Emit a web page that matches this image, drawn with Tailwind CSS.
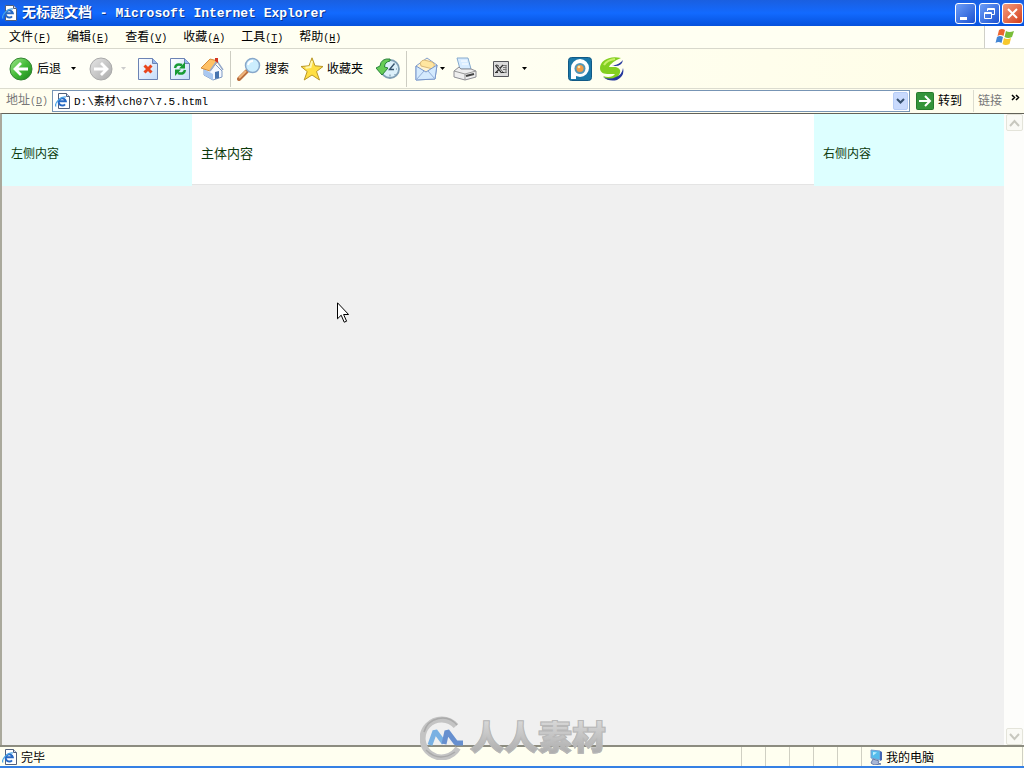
<!DOCTYPE html>
<html lang="zh-CN">
<head>
<meta charset="utf-8">
<title>无标题文档 - Microsoft Internet Explorer</title>
<script src="https://cdn.jsdelivr.net/npm/@tailwindcss/browser@4"></script>
</head>
<body class="relative flex h-screen flex-col overflow-hidden bg-[#fffff2] font-['Liberation_Mono','Noto_Sans_CJK_SC',monospace] text-xs leading-4 text-black">
<svg class="absolute size-0" aria-hidden="true">
  <symbol id="page-ie" viewBox="0 0 16 16">
    <path d="M3.500.5h8l3 3v12h-11z" fill="#fff" stroke="#52607c"/><path d="M11.500.5v3h3" fill="#d2def5" stroke="#52607c"/>
    <path d="M10 11.300a3.600 3.600 0 1 1 .8-3H4.200" fill="none" stroke="#2869c4" stroke-width="2"/>
    <path d="M1 13.500C-1 10 6 3 11 4" fill="none" stroke="#4aa4e5" stroke-width="1.200"/>
  </symbol>
  <symbol id="down" viewBox="0 0 5 3"><path d="M0 0h5L2.500 3z" fill="currentColor"/></symbol>
  <linearGradient id="green" x1="0" y1="0" x2="1" y2="1"><stop stop-color="#a2e890"/><stop offset=".5" stop-color="#45bc38"/><stop offset="1" stop-color="#18841c"/></linearGradient>
  <linearGradient id="gray" x1="0" y1="0" x2="1" y2="1"><stop stop-color="#e6e6e6"/><stop offset="1" stop-color="#aaa"/></linearGradient>
  <linearGradient id="paper" x1="0" y1="0" x2="1" y2="1"><stop stop-color="#fff"/><stop offset="1" stop-color="#c4dcfa"/></linearGradient>
</svg>

<header class="flex h-[26px] shrink-0 items-center bg-linear-to-b from-[#1a5fe0] via-[#126aff] to-[#0752dc] pr-px pl-0.5 text-white">
  <svg class="mr-1 size-4"><use href="#page-ie"/></svg>
  <h1 class="flex-1 text-[14px] font-bold whitespace-pre [text-shadow:1px_1px_#0b3690]">无标题文档<span class="text-[13px]"> - Microsoft Internet Explorer</span></h1>
  <div class="flex gap-0.5">
    <button aria-label="最小化" class="size-[21px] rounded-[3px] border border-white bg-linear-to-br from-[#6d9df7] to-[#1c50d0]"><svg viewBox="0 0 19 19"><path d="M4 13h7v3H4z" fill="#fff"/></svg></button>
    <button aria-label="还原" class="ml-px size-[21px] rounded-[3px] border border-white bg-linear-to-br from-[#6d9df7] to-[#1c50d0]"><svg viewBox="0 0 19 19" fill="none" stroke="#fff"><path d="M7.500 7V4.500h7v6H12M7 5.500h8M4.500 8.500h7v6h-7zM4 9.500h8"/></svg></button>
    <button aria-label="关闭" class="size-[21px] rounded-[3px] border border-white bg-linear-to-br from-[#f39b7d] to-[#d33a12]"><svg viewBox="0 0 19 19"><path d="M5 5l9 9M14 5l-9 9" stroke="#fff" stroke-width="2"/></svg></button>
  </div>
</header>

<nav class="flex h-[23px] shrink-0 items-stretch border-b border-[#d8d8cc]">
  <div class="flex flex-1 items-center gap-4 pt-0.5 pl-[9px]">
    <button class="whitespace-nowrap">文件<span class="text-[10px]">(<u>F</u>)</span></button>
    <button class="whitespace-nowrap">编辑<span class="text-[10px]">(<u>E</u>)</span></button>
    <button class="whitespace-nowrap">查看<span class="text-[10px]">(<u>V</u>)</span></button>
    <button class="whitespace-nowrap">收藏<span class="text-[10px]">(<u>A</u>)</span></button>
    <button class="whitespace-nowrap">工具<span class="text-[10px]">(<u>T</u>)</span></button>
    <button class="whitespace-nowrap">帮助<span class="text-[10px]">(<u>H</u>)</span></button>
  </div>
  <div class="flex w-10 items-center justify-center border-l border-[#d0d0c8] bg-white">
    <svg class="h-[18px] w-5" viewBox="0 0 20 18"><path d="M4 2q3-2 6 0L8.500 8q-3-2-6 0z" fill="#ec6530"/><path d="M11 3q3 2 8 0l-2 6q-4 2-7.500 0z" fill="#79bd39"/><path d="M2 9q3-2 6 0l-1.500 6q-3-2-6 0z" fill="#4385d4"/><path d="M9 10q3 2 7 0l-1.500 6q-4 2-7 0z" fill="#f7c82d"/></svg>
  </div>
</nav>

<div class="flex h-10 shrink-0 items-center border-b border-[#dcdccf] bg-linear-to-r from-[#fffff8] via-[#fffff2] to-[#fffde6]" role="toolbar">
  <div class="flex w-[230px] shrink-0 items-center pl-[9px]">
    <button class="flex items-center gap-1"><svg class="size-6" viewBox="0 0 24 24"><circle cx="12" cy="12" r="11" fill="url(#green)" stroke="#358433"/><path d="M19 12H6M12 6l-6 6 6 6" fill="none" stroke="#fff" stroke-width="2.800"/></svg><span class="pt-0.5">后退</span></button>
    <button aria-label="后退列表" class="ml-2.5"><svg class="h-[3px] w-[5px]"><use href="#down"/></svg></button>
    <button aria-label="前进" class="ml-[13px]"><svg class="size-6" viewBox="0 0 24 24"><circle cx="12" cy="12" r="11" fill="url(#gray)" stroke="#aaa"/><path d="M5 12h13M12 6l6 6-6 6" fill="none" stroke="#fff" stroke-width="2.800"/></svg></button>
    <button aria-label="前进列表" class="ml-2 text-[#ccc]"><svg class="h-[3px] w-[5px]"><use href="#down"/></svg></button>
    <button aria-label="停止" class="ml-3"><svg class="h-6 w-5" viewBox="0 0 20 24"><path d="M.5 1.500h14l5 5v16H.5z" fill="url(#paper)" stroke="#6c83b4"/><path d="M14.500 1.500v5h5" fill="#96b6ee" stroke="#6c83b4"/><path d="M6.500 8.500l7 7M13.500 8.500l-7 7" stroke="#e9451c" stroke-width="3"/></svg></button>
    <button aria-label="刷新" class="ml-3"><svg class="h-6 w-5" viewBox="0 0 20 24"><path d="M.5 1.500h14l5 5v16H.5z" fill="url(#paper)" stroke="#6c83b4"/><path d="M14.500 1.500v5h5" fill="#96b6ee" stroke="#6c83b4"/><path d="M5 11Q6 6 12 8M15 13q-1 5-7 3" fill="none" stroke="#189b35" stroke-width="2.500"/><path d="M15 5v6.500H9zM5 19v-6.500h6z" fill="#189b35"/></svg></button>
    <button aria-label="主页" class="ml-2.5"><svg class="size-6" viewBox="0 0 24 24"><path d="M4 12l10-6 8 8v6l-9 3-9-5z" fill="#f4f8ff" stroke="#7d99c4"/><path d="M4 12l9 5v6l-9-5z" fill="#a9c8f0"/><path d="M1 11L10 2l8 2-8 10z" fill="#ffc165" stroke="#d58c39"/><path d="M10 14l7-10 6 9" fill="none" stroke="#96a9cb" stroke-width="1.500"/><path d="M15 1h3v5l-3-2z" fill="#d43622"/><path d="M15 15l4-1v7l-4 1z" fill="#4774af"/></svg></button>
  </div>
  <div class="flex h-9 w-[176px] shrink-0 items-center border-l border-[#cdcdc2] pl-1.5">
    <button class="flex items-center gap-1 whitespace-nowrap"><svg class="size-6" viewBox="0 0 24 24"><path d="M10 14l-8 8" stroke="#b96e3d" stroke-width="4" stroke-linecap="round"/><path d="M9 14l-7 7" stroke="#f2b77e" stroke-width="2"/><circle cx="15.500" cy="8.500" r="7" fill="#cceefe" stroke="#88a8ca" stroke-width="1.500"/><path d="M11 8q1-4 5-4" fill="none" stroke="#fff" stroke-width="2"/></svg><span class="pt-0.5">搜索</span></button>
    <button class="ml-[11px] flex items-center gap-[3px] whitespace-nowrap"><svg class="size-6" viewBox="0 0 24 24"><path d="M12 .8l3 8 8 .7-6.500 5 3 8.500-7.500-5-7.800 5 3-8.500L1 9.500l8-.7z" fill="#ffdf43" stroke="#b99628"/><path d="M12 4l-1.500 6-5 .8" fill="none" stroke="#fff8b3" stroke-width="2"/></svg><span class="pt-0.5">收藏夹</span></button>
    <button aria-label="历史" class="ml-[13px]"><svg class="size-6" viewBox="0 0 24 24"><circle cx="14" cy="12" r="9" fill="#dcf0fa" stroke="#7f9eb4" stroke-width="1.800"/><path d="M18.500 6.500L13.500 12.500H18" fill="none" stroke="#38536d" stroke-width="1.400"/><path d="M14 17.500v2M21 12h-1M18.500 17l1 1" stroke="#6b8ba2"/><path d="M14 2Q5 1 4 9L0 11l6 7 6-7-3.500-1q0-5 5.500-6z" fill="#66cd55" stroke="#28813a"/></svg></button>
  </div>
  <div class="flex h-9 items-center border-l border-[#cdcdc2] pl-2">
    <button aria-label="邮件"><svg class="size-6" viewBox="0 0 24 24"><path d="M1 9L12 1l10 7-2 14-19 1z" fill="#fff3d0" stroke="#829fcd"/><path d="M6 9q-2-5 3-6l8 2q4 2 1 7z" fill="#ffe6a0" stroke="#dab878"/><path d="M1 9l10 6 11-7-2 14-19 1z" fill="#d4eafe" stroke="#7897cc"/><path d="M1 23l8-9M20 22l-7-8" stroke="#91add7"/></svg></button>
    <button aria-label="邮件列表" class="ml-px"><svg class="h-[3px] w-[5px]"><use href="#down"/></svg></button>
    <button aria-label="打印" class="ml-2"><svg class="size-6" viewBox="0 0 24 24"><path d="M4 1h11l3 11H7z" fill="#d8ecff" stroke="#86aacd"/><path d="M8 4h6M9 7h6" stroke="#fff"/><path d="M1 14l5-4 2 2h10l5 2v6l-11 3L1 20z" fill="#eee" stroke="#8e8e94"/><path d="M1 14l11 3 11-3M12 17v6" fill="none" stroke="#999"/><path d="M13 19l8-2" stroke="#444" stroke-width="2"/></svg></button>
    <button aria-label="Excel" class="ml-4"><svg class="size-4" viewBox="0 0 16 16"><path d="M.5.5h15v15H.5z" fill="#dcdcdc" stroke="#55565b"/><path d="M9 4.500h4.500M10 6.500h3.500M10 8.500h3.500M8 11.500h5.500M13 4v8" stroke="#777"/><path d="M3 4l6 7.500" stroke="#333" stroke-width="2.500"/><path d="M10 4l-7 7.500M2.500 4.500h3M2 11.500h3M8 11.500h3" stroke="#333" stroke-width="1.200"/><path d="M4 4.500l5 6.500" stroke="#fff" stroke-width=".8"/></svg></button>
    <button aria-label="Excel 列表" class="ml-[13px]"><svg class="h-[3px] w-[5px]"><use href="#down"/></svg></button>
    <button aria-label="图片工具" class="ml-[41px]"><svg class="size-6" viewBox="0 0 24 24"><rect x=".5" y=".5" width="23" height="23" rx="3" fill="#1b78a9" stroke="#115985"/><path d="M3 22V11a9 9 0 1 1 9 9l-4-1v3z" fill="#fff"/><circle cx="12" cy="11.500" r="5.500" fill="#5496b5"/><circle cx="12" cy="11.500" r="3.500" fill="#f39b45"/><circle cx="11" cy="10" r="1.300" fill="#ffe39e"/></svg></button>
    <button aria-label="浏览器助手" class="ml-2"><svg class="size-6" viewBox="0 0 24 24"><path d="M21 1C9-2 0 4 0 11c0 5 4 6 9 6h6c-2 3-7 4-12 2 5 6 13 5 16-1 3-5 0-8-5-8H9Q11 5 21 1z" fill="#83cf20"/><path d="M12 8q6 1 11-5-1 6-8 6zM3 20q7 3 13 0 6-2 7-9 2 8-6 12-8 2-14-3z" fill="#26389d"/><path d="M4 8Q7 3 15 2" fill="none" stroke="#c8ef6a" stroke-width="2"/></svg></button>
  </div>
</div>

<form class="flex h-6 shrink-0 items-center bg-[#fffeee] pl-1.5">
  <label for="address" class="w-[46px] shrink-0 pt-px whitespace-nowrap text-[#777]">地址<span class="text-[10px]">(<u>D</u>)</span></label>
  <div class="flex h-[22px] min-w-0 flex-1 items-center border border-[#7795b5] bg-white pl-0.5">
    <svg class="size-4 shrink-0"><use href="#page-ie"/></svg>
    <input id="address" value="D:\素材\ch07\7.5.html" class="ml-[3px] min-w-0 flex-1 pt-px text-[11px] outline-none">
    <button type="button" aria-label="地址列表" class="mr-px flex h-[18px] w-[15px] items-center justify-center rounded-xs border border-[#b7cdf6] bg-[#c9dafd]"><svg class="h-2 w-[9px]" viewBox="0 0 9 8"><path d="M1 2l3.500 3.500L8 2" fill="none" stroke="#36506f" stroke-width="2"/></svg></button>
  </div>
  <button type="button" class="ml-1.5 flex w-[57px] items-center gap-1 whitespace-nowrap"><svg class="size-[18px]" viewBox="0 0 18 18"><rect x=".5" y=".5" width="17" height="17" rx="1" fill="#34943a" stroke="#267b2c"/><path d="M3 9h11M9 4l5 5-5 5" fill="none" stroke="#fff" stroke-width="2"/></svg><span class="pt-0.5">转到</span></button>
  <div class="flex h-[22px] w-[51px] items-center justify-between border-l border-[#dcdccf] pr-1 pl-1"><a href="#" class="pt-px text-[#777]">链接</a><button type="button" aria-label="更多" class="mb-2"><svg class="h-[7px] w-[9px]" viewBox="0 0 9 7"><path d="M1 1l2.500 2.500L1 6M5 1l2.500 2.500L5 6" fill="none" stroke="#000" stroke-width="1.500"/></svg></button></div>
</form>

<main class="flex min-h-0 flex-1 border-t border-l-2 border-t-[#626258] border-l-[#aaa99c] bg-[#f0f0f0] text-[#0c3a0c]">
  <div class="flex flex-1 items-start">
    <aside class="h-[72px] w-[190px] bg-[#dff] px-[9px] pt-[33px]">左侧内容</aside>
    <section class="h-[71px] flex-1 border-b border-[#e4e4e4] bg-white px-[9px] pt-[33px] text-[13px]">主体内容</section>
    <aside class="h-[72px] w-[190px] bg-[#dff] px-[9px] pt-[33px]">右侧内容</aside>
  </div>
  <div class="flex w-5 flex-col items-center justify-between bg-[#fdfdfb]">
    <button aria-label="向上滚动" class="flex size-[17px] items-center justify-center rounded-xs border border-[#e4e4da] bg-[#fafaf5]"><svg class="h-2 w-[11px]" viewBox="0 0 11 8"><path d="M1 7l4.500-5L10 7" fill="none" stroke="#c8c8bf" stroke-width="2"/></svg></button>
    <button aria-label="向下滚动" class="flex size-[17px] items-center justify-center rounded-xs border border-[#e4e4da] bg-[#fafaf5]"><svg class="h-2 w-[11px]" viewBox="0 0 11 8"><path d="M1 1l4.500 5L10 1" fill="none" stroke="#c8c8bf" stroke-width="2"/></svg></button>
  </div>
</main>

<footer class="flex h-[23px] shrink-0 items-stretch border-t-2 border-b-2 border-t-[#8c8c80] border-b-[#3580e4] bg-[#fffff0]">
  <div class="flex flex-1 items-center gap-[3px] pl-0.5"><svg class="size-4"><use href="#page-ie"/></svg><span class="pt-1">完毕</span></div>
  <div class="w-6 border-l border-[#d0d0c3]"></div><div class="w-6 border-l border-[#d0d0c3]"></div><div class="w-6 border-l border-[#d0d0c3]"></div><div class="w-6 border-l border-[#d0d0c3]"></div><div class="w-6 border-l border-[#d0d0c3]"></div>
  <div class="mr-px flex w-[162px] items-center gap-0.5 border-x border-[#d0d0c3] pl-1.5"><svg class="size-4" viewBox="0 0 16 16"><path d="M3 1l9 1v9l-9-2z" fill="#55bcec" stroke="#789cd0"/><path d="M12 2l2 1v8l-2 1z" fill="#4568b5"/><path d="M5 10l6 2-1 2 3 1-7 1-3-2z" fill="#a9b7d6" stroke="#697da8"/><path d="M5 3l4 .5-4 3z" fill="#bdefff"/></svg><span class="pt-1">我的电脑</span></div>
</footer>

<div class="pointer-events-none absolute bottom-2 left-[420px] flex items-center gap-1.5" aria-hidden="true">
  <svg class="h-[45px] w-11" viewBox="0 0 44 45"><path d="M36 11A19 19 0 1 0 38 33" fill="none" stroke="#c4c4c4" stroke-width="6"/><path d="M37 10A19 19 0 0 0 4 17M6 35q13 13 29 2" fill="none" stroke="#aaa" stroke-width="1.500"/><path d="M10 30l5-14 9 12" fill="none" stroke="#79b1e3" stroke-width="5" stroke-linejoin="bevel"/><path d="M24 29l3-13 9 12h7" fill="none" stroke="#668fcf" stroke-width="5" stroke-linejoin="bevel"/></svg>
  <span class="bg-linear-to-b from-[#dedede] to-[#a5a5a5] bg-clip-text pb-1 font-['Noto_Sans_CJK_SC',sans-serif] text-[34px] leading-10 font-black text-transparent [-webkit-text-stroke:1px_#b8b8b8]">人人素材</span>
</div>
<svg class="pointer-events-none absolute top-[302px] left-[337px] h-[21px] w-3" viewBox="0 0 12 21" aria-hidden="true"><path d="M.5.800v16l3.700-3.600 3 7 2.400-1-3-6.700h5z" fill="#fff" stroke="#000"/></svg>
</body>
</html>
